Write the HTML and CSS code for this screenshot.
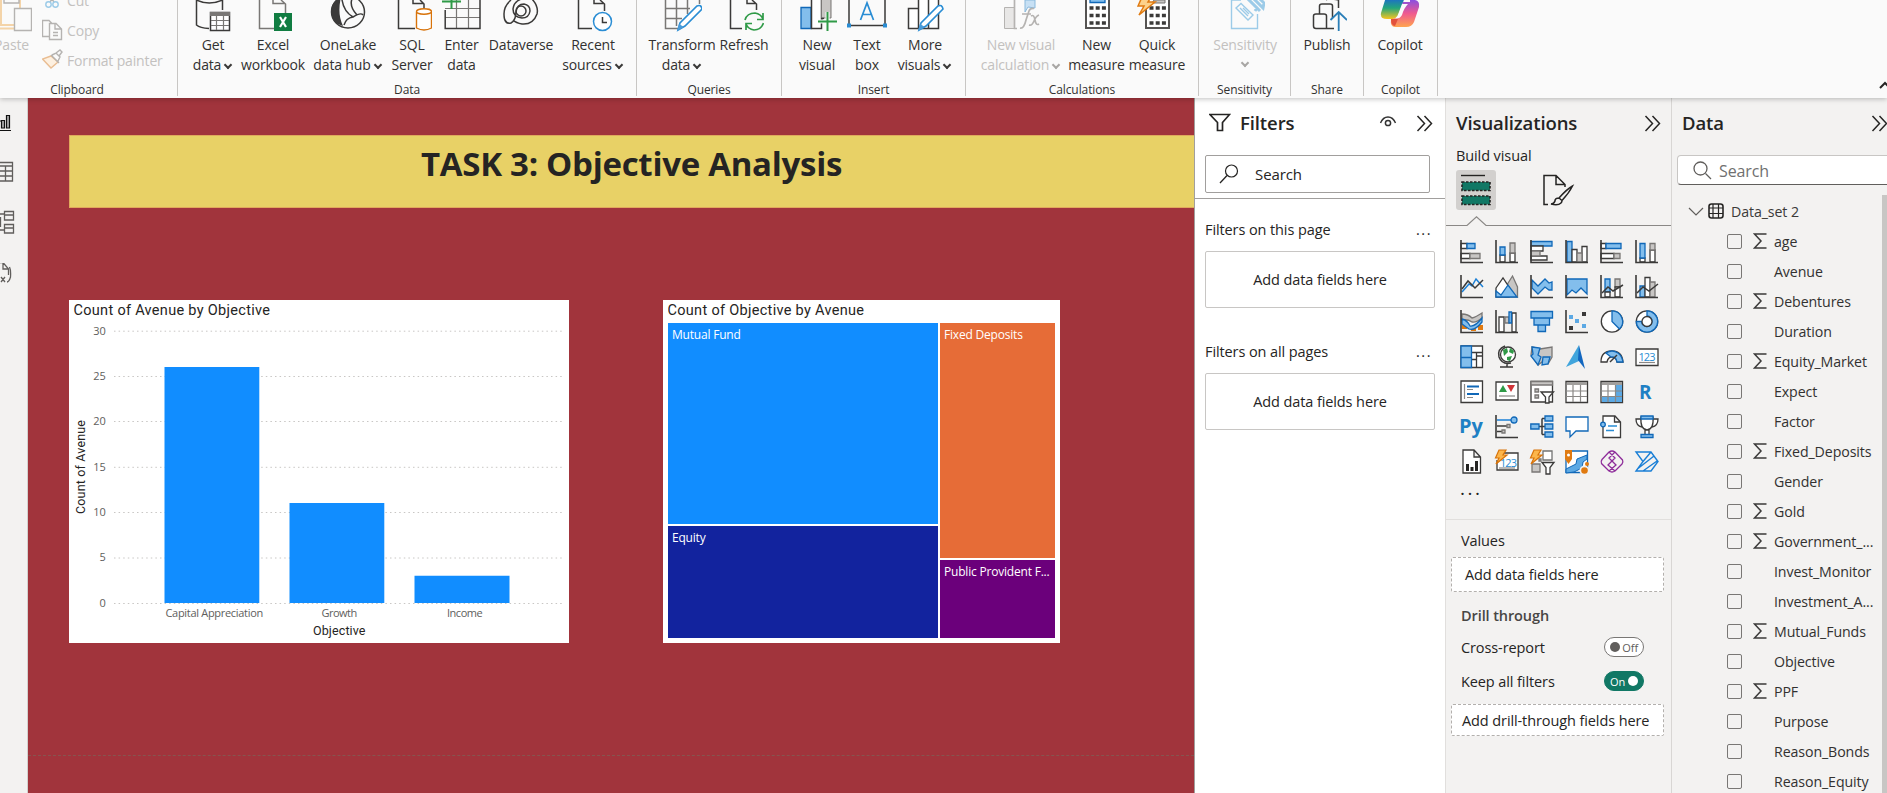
FILE: index.html
```html
<!DOCTYPE html>
<html lang="en">
<head>
<meta charset="utf-8">
<title>Objective Analysis</title>
<link rel="stylesheet" href="styles.css">
</head>
<body>
<svg width="0" height="0" class="defs"><symbol id="sigma" viewBox="0 0 14 16"><path d="M13.500 1H1.500L8 8L1.500 15H13.500" fill="none" stroke="#3b3a39" stroke-width="1.500"/></symbol></svg>
<div class="app">
<header class="ribbon">
  <section class="group clipboard">
    <div class="tools">
      <div class="paste">
        <svg width="32" height="32" viewBox="0 0 32 32"><path class="tan" d="M-6 28.500H14M1 0V25H14M20 0V8" stroke-opacity=".9"/><path class="dis" d="M4 0V3H19V0M14.500 8.500H31.500V30.500H14.500Z"/></svg>
        <span>Paste</span>
      </div>
      <ul class="clips">
        <li><svg width="22" height="22" viewBox="42 -8 22 22"><g class="dis"><path d="M47 -5L54 5M57 -5L50 5"/></g><g class="pale"><circle cx="48.500" cy="7.500" r="2.700"/><circle cx="55.500" cy="7.500" r="2.700"/></g></svg>Cut</li>
        <li><svg width="22" height="22" viewBox="42 20 22 22"><path class="dis" d="M49 37.500H42.500V21.500H49L52 24.500M55 24.500H49.500V40.500H61.500V30L56 24.500H55V30H61M53 33.500H58M53 36.500H58"/></svg>Copy</li>
        <li><svg width="22" height="22" viewBox="42 50 22 22"><path d="M51 57L42.500 60L51 69L58 63Z" fill="#fdf0e0" stroke="#e9bd92" stroke-width="1.400"/><path class="dis" d="M51 56L59 64M52 56L56 54L60 58L58 62M56 54L60 51L62 53L59 57"/></svg>Format painter</li>
      </ul>
    </div>
    <h2>Clipboard</h2>
  </section>
  <section class="group data">
    <div class="tools">
      <div class="btn w56"><svg viewBox="196 0 40 32"><path class="d" d="M199.500 0V25Q203 28 212 28.500M225.500 0V10M199.500 0Q212 6 225.500 0"/><path class="dw" d="M213.500 12.500H232.500V30.500H213.500Z"/><path d="M213 12H233V16H213Z" fill="#797775"/><path class="g" d="M214 20.500H232M214 25.500H232M219.500 16V30M226.500 16V30"/></svg><span>Get</span><span>data<i class="chev"></i></span></div>
      <div class="btn w64"><svg viewBox="254 0 40 32"><path class="g2" d="M276 28.500H260.500V0M286.500 13V4L282 0M274 0V3.500H286"/><path d="M275 13H293V31H275Z" fill="#107c41"/><path d="M281 17L287 27M287 17L281 27" stroke="#fff" stroke-width="2.200"/></svg><span>Excel</span><span>workbook</span></div>
      <div class="btn w86"><svg viewBox="328 0 40 32"><ellipse cx="348" cy="12" rx="16.500" ry="16" class="d2"/><path d="M341 -3Q337 14 343 26Q332 24 331 12Q331 1 341 -3Z" fill="#3b3a39"/><path class="d2" d="M342 0Q344 12 353 17Q361 12 363 15M344 25Q346 18 353 17M353 -3Q348 5 357 15"/></svg><span>OneLake</span><span>data hub<i class="chev"></i></span></div>
      <div class="btn w42"><svg viewBox="392 0 40 32"><path class="d2" d="M415 28.500H398.500V0M413 0V3.500H424M420 0L424 4V8"/><path d="M416.500 12V28Q424 32 431.500 28V12" fill="#fff" stroke="#d8730a" stroke-width="1.400"/><ellipse cx="424" cy="11.500" rx="7.500" ry="2.800" fill="#fff" stroke="#d8730a" stroke-width="1.400"/></svg><span>SQL</span><span>Server</span></div>
      <div class="btn w58"><svg viewBox="442 0 40 32"><path class="g" d="M456.500 0V28M468.500 0V28M445 8.500H480M445 17.500H480"/><path class="d2" d="M445.200 10V28.500H480V0"/><path d="M442 1.500H461M451.500 0V9" stroke="#2f9a47" stroke-width="2"/></svg><span>Enter</span><span>data</span></div>
      <div class="btn w62"><svg viewBox="502 0 40 32"><path class="d2" d="M512 23Q505 25 505 14Q505 6 512 0M506 20Q508 24 512 23Q517 20 517 12Q518 4 525 4Q531 5 531 11Q530 18 523 18Q514 17 514 9Q515 0 526 -2M532 -2Q540 6 538 14Q534 25 523 24Q517 23 514 20"/><circle cx="522" cy="11" r="5" class="d2"/></svg><span>Dataverse</span></div>
      <div class="btn w82"><svg viewBox="573 0 40 32"><path class="d2" d="M592 28.500H578.500V0M594 0V3.500H604M600 0L604.500 4V11"/><circle cx="602.500" cy="21.500" r="9" fill="#fff" stroke="#2a8dd4" stroke-width="1.500"/><path class="d" d="M602.500 17V22.500H607"/></svg><span>Recent</span><span>sources<i class="chev"></i></span></div>
    </div>
    <h2>Data</h2>
  </section>
  <section class="group queries">
    <div class="tools">
      <div class="btn w70"><svg viewBox="662 0 40 32"><path class="g2" d="M678 28.500H665.500V0M699.500 0V4M665 8.500H690M665 18.500H682M676.500 0V26M687.500 0V14"/><path class="pen" d="M678 30L680 23L697 6Q701 4 702 9L685 26Z"/><path d="M677 31L679 24L684 27Z" fill="#4a9bd8"/></svg><span>Transform</span><span>data<i class="chev"></i></span></div>
      <div class="btn w54"><svg viewBox="724 0 40 32"><path class="d2" d="M742 28.500H730.500V0M747 0V3.500H756M752 0L756.500 4V10"/><path d="M745 20Q747 13 755 13Q761 14 763 19M763 13V19.500H757M763.500 23Q761 30 754 30Q748 29 746 24M746 30V23.500H752" fill="none" stroke="#2f9a47" stroke-width="1.700"/></svg><span>Refresh</span></div>
    </div>
    <h2>Queries</h2>
  </section>
  <section class="group insert">
    <div class="tools">
      <div class="btn w48"><svg viewBox="797 0 40 32"><path class="b" d="M801 7.500H811V28.500H801Z"/><path class="dw" d="M811.500 -2V28.500H821.500V-2Z"/><path d="M821.500 -2H831V18H821.500Z" fill="#c8c6c4" stroke="#797775"/><path d="M822 22V18.500H824" class="d"/><path d="M818 21.500H837M827.500 12V31" stroke="#fafafa" stroke-width="4"/><path d="M818 21.500H837M827.500 12V31" stroke="#2f9a47" stroke-width="2"/></svg><span>New</span><span>visual</span></div>
      <div class="btn w52"><svg viewBox="847 0 40 32"><path class="d2" d="M849 0V25.500H885V0"/><path d="M847 23.500H851V27.500H847ZM883 23.500H887V27.500H883Z" fill="#2a8dd4"/><path d="M860.500 20L867 3L873.500 20M862.500 14.500H871.500" fill="none" stroke="#2a8dd4" stroke-width="1.700"/></svg><span>Text</span><span>box</span></div>
      <div class="btn w64"><svg viewBox="905 0 40 32"><path class="dw" d="M908.500 8.500H918.500V28.500H908.500ZM918.500 -2V28.500H928.500V-2M928.500 0V28.500H938.500V0"/><path class="pen" d="M919 30L921 23L938 6Q942 4 943 9L926 26Z"/><path d="M918 31L920 24L925 27Z" fill="#4a9bd8"/></svg><span>More</span><span>visuals<i class="chev"></i></span></div>
    </div>
    <h2>Insert</h2>
  </section>
  <section class="group calc">
    <div class="tools">
      <div class="btn w94 off"><svg viewBox="1001 0 40 32"><path d="M1004.500 7.500H1014.500V28.500H1004.500Z" fill="#e8e7e6" stroke="#b5b3b1"/><path d="M1025 0H1035V8L1028 7L1025 12Z" fill="#c7e0f4" stroke="#8ab9dc"/><path class="dis fx" d="M1014.500 0V28.500H1017M1020 28Q1024 29 1026 20L1029 11Q1030 8 1034 8.500M1022 14H1031M1031 16Q1034 14 1035 20Q1036 26 1039 24M1039 15Q1036 16 1034 21Q1032 26 1029 25"/></svg><span>New visual</span><span>calculation<i class="chev"></i></span></div>
      <div class="btn w58"><svg viewBox="1076 0 40 32"><path d="M1085 -2H1108V28H1085Z" fill="#fff" stroke="#555352" stroke-width="2"/><path class="b" d="M1089 -2H1104V2.500H1089Z"/><path d="M1088.500 8H1105M1088.500 15.500H1105M1088.500 23H1105" stroke="#3b3a39" stroke-width="3.600" stroke-dasharray="4 2.200"/></svg><span>New</span><span>measure</span></div>
      <div class="btn w64"><svg viewBox="1137 0 40 32"><path d="M1146 -2H1169V28H1146Z" fill="#fff" stroke="#555352" stroke-width="2"/><path d="M1154 0H1165V3H1152Z" fill="#c8c6c4" stroke="#797775"/><path d="M1149.500 8H1166M1149.500 15.500H1166M1149.500 23H1166" stroke="#3b3a39" stroke-width="3.600" stroke-dasharray="4 2.200"/><path d="M1142 -3H1151L1148 2H1155L1139 15L1144 6H1138Z" fill="#fcd28b" stroke="#e07a10" stroke-width="1.500"/></svg><span>Quick</span><span>measure</span></div>
    </div>
    <h2>Calculations</h2>
  </section>
  <section class="group sens">
    <div class="tools"><div class="btn w92 off"><svg viewBox="1224 0 40 32"><path class="pale" d="M1240 0H1230.500V28.500H1256.500V14M1235 8L1240 3.500L1252 15L1247 20ZM1239 8L1247 16M1242 8L1248 14"/><path d="M1246 -2L1256 8L1254 11M1252 -2L1262 8L1263 3L1256 -4M1256 8L1259 11" fill="none" stroke="#9ccbe8" stroke-width="3"/></svg><span>Sensitivity</span><span><i class="chev solo"></i></span></div></div>
    <h2>Sensitivity</h2>
  </section>
  <section class="group share">
    <div class="tools"><div class="btn w72"><svg viewBox="1307 0 40 32"><path class="d2" d="M1326 28.500H1316Q1313.500 28.500 1313.500 26V16Q1313.500 14 1316 14H1324Q1326.500 14 1326.500 16V28M1319.500 14V6Q1319.500 4 1322 4H1330Q1332.500 4 1332.500 6V18M1334 28.500H1326M1326 0Q1328 -2 1338.500 0V8"/><path d="M1338.700 31V12M1330.500 20L1338.700 12L1347 20" fill="none" stroke="#2b7fb8" stroke-width="1.800"/></svg><span>Publish</span></div></div>
    <h2>Share</h2>
  </section>
  <section class="group copilot">
    <div class="tools"><div class="btn w72"><svg viewBox="1380 0 40 32"><defs>
      <linearGradient id="cl" x1="0" y1="0" x2="0" y2="1"><stop offset="0" stop-color="#1b62d8"/><stop offset=".5" stop-color="#23a67b"/><stop offset="1" stop-color="#f7c51e"/></linearGradient>
      <linearGradient id="cr" x1="0" y1="0" x2="0" y2="1"><stop offset="0" stop-color="#8a4fe0"/><stop offset=".5" stop-color="#ef5a8f"/><stop offset="1" stop-color="#ffa44f"/></linearGradient></defs>
      <path d="M1386 -3H1405L1398 16Q1396 19 1393 19H1387Q1380 19 1381 13Z" fill="url(#cl)"/><path d="M1403 2H1410V0H1415Q1420 1 1419 7L1414 22Q1412 27 1406 27H1395Q1390 27 1391 19Q1397 19 1399 14Z" fill="url(#cr)"/><path d="M1402 4H1408Q1404 8 1402 15Q1400 19 1395 18.500Q1398 16 1399 12Z" fill="#fafafa"/><path d="M1391 19H1398L1395 26Q1391 26 1391 19Z" fill="#e2513c"/></svg><span>Copilot</span></div></div>
    <h2>Copilot</h2>
  </section>
  <svg class="collapse" width="8" height="9" viewBox="0 0 8 9"><path d="M1 7L6 2L11 7" fill="none" stroke="#252423" stroke-width="2"/></svg>
</header>

<main class="work">
  <nav class="rail">
    <svg width="16" height="20" viewBox="0 112 16 20"><path d="M-1 121H1M1.500 120.500H4.500V128H1.500ZM6.500 115.500H9.500V128H6.500ZM0 130.500H11" fill="#aaa" stroke="#111" stroke-width="1.200"/></svg>
    <svg width="16" height="24" viewBox="0 159 16 24"><path class="r" d="M0 162.500H12.500V181H0M0 166H12M0 171H12M0 176H12M5.500 166V181"/></svg>
    <svg width="16" height="26" viewBox="0 210 16 26"><path class="r" d="M4.500 211.500H13.500V220H4.500ZM4.500 215H13M4.500 224.500H13.500V233H4.500ZM4.500 228H13M0 214H4M0 230H4M.5 217V227"/></svg>
    <svg width="16" height="26" viewBox="0 263 16 26"><path class="r" d="M0 262.500H3L8.500 269V275M3 262.500V269H8M9.500 267Q11 270 10.500 277Q9 282 7 282M1 277L5 282M5 277L1 282"/></svg>
  </nav>

  <section class="canvas">
    <h1 class="banner">TASK 3: Objective Analysis</h1>
    <div class="visuals">
      <svg class="card" width="500" height="343" viewBox="69 300 500 343" role="img">
        <text class="din" x="73.500" y="315" textLength="196.500">Count of Avenue by Objective</text>
        <path class="grid" d="M114 331.200H562M114 376.500H562M114 421.500H562M114 467.300H562M114 512.500H562M114 558H562M114 603.500H562"/>
        <g class="tick end"><text x="105.500" y="335">30</text><text x="105.500" y="380">25</text><text x="105.500" y="425">20</text><text x="105.500" y="471">15</text><text x="105.500" y="516">10</text><text x="105.500" y="561">5</text><text x="105.500" y="607">0</text></g>
        <path d="M164.500 367H259.300V603H164.500ZM289.500 503H384.300V603H289.500ZM414.500 575.700H509.500V603H414.500Z" fill="#118dff"/>
        <g class="tick"><text x="165.500" y="617" textLength="97.500">Capital Appreciation</text><text x="321.500" y="617" textLength="35.500">Growth</text><text x="447" y="617" textLength="35.500">Income</text></g>
        <text class="din ax" x="313" y="635" textLength="52.500">Objective</text>
        <text class="din ax" transform="translate(85 514) rotate(-90)" textLength="94">Count of Avenue</text>
      </svg>
      <div class="card tree">
        <svg width="388" height="22" viewBox="668 300 388 22"><text class="din" x="667.500" y="315" textLength="196.500">Count of Objective by Avenue</text></svg>
        <div class="map">
          <div class="col"><div class="leaf mutual">Mutual Fund</div><div class="leaf equity">Equity</div></div>
          <div class="col narrow"><div class="leaf fixed">Fixed Deposits</div><div class="leaf ppf">Public Provident F...</div></div>
        </div>
      </div>
    </div>
    <div class="pageline"></div>
  </section>

  <aside class="filters">
    <div class="fhead">
      <svg width="22" height="20" viewBox="0 0 22 20"><path d="M1 1.500H20.500L13.500 9.500V17.500H8.500V9.500Z" fill="none" stroke="#252423" stroke-width="1.700"/></svg>
      <h3>Filters</h3>
      <svg class="eye" width="18" height="14" viewBox="0 0 18 14"><path d="M1.500 8Q4 2 9 2Q14 2 16.500 8" fill="none" stroke="#333" stroke-width="1.400"/><circle cx="9" cy="8" r="2.600" fill="none" stroke="#333" stroke-width="1.500"/></svg>
      <svg width="17" height="17" viewBox="0 0 17 17"><path class="dbl" d="M1.500 1L8.500 8.500L1.500 16M8.500 1L15.500 8.500L8.500 16"/></svg>
    </div>
    <div class="search"><svg width="20" height="20" viewBox="0 0 20 20"><circle cx="12.500" cy="7" r="6" fill="none" stroke="#252423" stroke-width="1.200"/><path d="M1 19L8 11.500" stroke="#252423" stroke-width="1.300"/></svg>Search</div>
    <div class="fsec"><p>Filters on this page<b>...</b></p><div class="well">Add data fields here</div></div>
    <div class="fsec"><p>Filters on all pages<b>...</b></p><div class="well">Add data fields here</div></div>
  </aside>

  <aside class="viz">
    <div class="vhead"><h3>Visualizations</h3><svg width="17" height="17" viewBox="0 0 17 17"><path class="dbl" d="M1.500 1L8.500 8.500L1.500 16M8.500 1L15.500 8.500L8.500 16"/></svg></div>
    <p class="build">Build visual</p>
    <div class="tabs">
      <div class="tab on"><svg width="40" height="40" viewBox="0 0 40 40"><path d="M5 5.500H29" stroke="#252423" stroke-width="1.400"/><path d="M6 12H34V20.500H6ZM6 26H34V34.500H6Z" fill="#117865" stroke="#252423" stroke-width="1.600" stroke-dasharray="2.500 1.500"/></svg></div>
      <div class="tab"><svg width="34" height="34" viewBox="0 0 34 34"><path d="M7 31.500H3V2.500H15L24 11.500V14M15 2.500V11.500H24M31.500 13Q26 16 18 25L21 27.500Q28 20 31.500 13ZM18 25Q14 25 14 28Q13 31 10 31Q17 33 20 30Q21 29 21 27.500" fill="none" stroke="#252423" stroke-width="1.500"/></svg></div>
    </div>
    <svg class="notch" width="225" height="11" viewBox="0 0 225 11"><path d="M0 9.500H21L30.500 .8L40 9.500H225" fill="none" stroke="#8a8886" stroke-width="1.200"/></svg>
    <div class="icons">
      <svg viewBox="0 0 24 24"><path class="k" d="M1 3.500H7V8.500H1ZM1 13.500H10V18.500H1Z"/><path class="b" d="M7 3.500H15V8.500H7Z"/><path class="s" d="M10 13.500H20V18.500H10Z"/><path class="ax2" d="M1 0V22.500H23"/></svg>
      <svg viewBox="0 0 24 24"><path class="k" d="M5 15H10V22H5ZM15 13H20V22H15Z"/><path class="b" d="M5 7H10V15H5Z"/><path class="s" d="M15 3H20V13H15Z"/><path class="ax2" d="M1 0V22.500H23"/></svg>
      <svg viewBox="0 0 24 24"><path class="b" d="M1 1.500H22V6H1Z"/><path class="k" d="M1 6H13V11H1ZM1 16H17V20H1Z"/><path class="s" d="M1 11H10V16H1Z"/><path class="ax2" d="M1 0V22.500H23"/></svg>
      <svg viewBox="0 0 24 24"><path class="b" d="M2 1.500H7V22H2Z"/><path class="k" d="M7 9.500H12V22H7ZM17 6.500H22V22H17Z"/><path class="s" d="M12 13H17V22H12Z"/><path class="ax2" d="M1 0V22.500H23"/></svg>
      <svg viewBox="0 0 24 24"><path class="k" d="M1 3.500H6V8.500H1ZM1 13.500H14V18.500H1Z"/><path class="b" d="M6 3.500H21V8.500H6Z"/><path class="s" d="M14 13.500H20V18.500H14Z"/><path class="ax2" d="M1 0V22.500H23"/></svg>
      <svg viewBox="0 0 24 24"><path class="k" d="M5 18H10V22H5ZM15 10H20V22H15Z"/><path class="b" d="M5 3.500H10V18H5Z"/><path class="s" d="M15 3.500H20V10H15Z"/><path class="ax2" d="M1 0V22.500H23"/></svg>

      <svg viewBox="0 0 24 24"><path class="bl" d="M2 17L9 9L12 11L16 4L23 12"/><path class="kl" d="M2 14L8 6L15 13L23 5"/><path class="ax2" d="M1 0V22.500H23"/></svg>
      <svg viewBox="0 0 24 24"><path class="s" d="M10 13L17.500 1L22.500 12V22H10Z"/><path class="k" d="M1 13L8 3L14 12V22H1Z"/><path class="b" d="M1 16L6 20L13 10L22 22H1Z"/></svg>
      <svg viewBox="0 0 24 24"><path class="b" d="M2 5L8 11L15 4L19 8L22 7V15H19L15 12L8 19L2 13Z"/><path class="ax2" d="M1 0V22.500H23"/></svg>
      <svg viewBox="0 0 24 24"><path class="b" d="M2 4H22V19L16 13L11 18L7 15L2 20Z"/><path class="ax2" d="M1 0V22.500H23"/></svg>
      <svg viewBox="0 0 24 24"><path class="b" d="M5 4H10V17H5Z"/><path class="s" d="M15 4H20V12H15Z"/><path class="k" d="M5 17H10V22H5ZM15 12H20V22H15Z"/><path class="kl" d="M2 18L8 12L13 16L23 10"/><path class="ax2" d="M1 0V22.500H23"/></svg>
      <svg viewBox="0 0 24 24"><path class="b" d="M5 11H10V22H5Z"/><path class="k" d="M10 2.500H15V22H10Z"/><path class="s" d="M15 7H20V22H15Z"/><path class="kl" d="M2 18L8 12L14 16L23 9"/><path class="ax2" d="M1 0V22.500H23"/></svg>

      <svg viewBox="0 0 24 24"><path d="M2 14H7V19H2ZM11 16H16V21H11ZM18 15H23V20H18Z" fill="#e07a10"/><path class="s" d="M2 4Q8 4 12 8Q16 7 22 3V8Q16 13 12 12Q8 9 2 10Z"/><path class="b" d="M2 9Q7 10 10 16Q15 17 22 8V12Q15 21 9 19Q6 17 2 14Z"/><path class="ax2" d="M1 0V22.500H23"/></svg>
      <svg viewBox="0 0 24 24"><path class="k" d="M4 7H9V22H4ZM17 3H21V22H17Z"/><path class="s" d="M10 7H14V13H10Z"/><path class="b" d="M14 2H16.500V13H14Z"/><path class="ax2" d="M1 0V22.500H23"/></svg>
      <svg viewBox="0 0 24 24"><path class="b" d="M1 1.500H22.500V8H1ZM4 8H19.500V15H4ZM8 15H15.500V21.500H8Z"/></svg>
      <svg viewBox="0 0 24 24"><path d="M17 2H21V6H17ZM4 16H8V20H4Z" fill="#3b3a39"/><path d="M4 5H8V9H4ZM10 9H14V13H10ZM17 14H21V18H17Z" fill="#5ca9e4"/><path class="ax2" d="M1 0V22.500H23"/></svg>
      <svg viewBox="0 0 24 24"><circle class="k" cx="12" cy="11.500" r="10.700"/><path class="b" d="M12 .8A10.700 10.700 0 0 1 19.500 19L12 11.500Z"/></svg>
      <svg viewBox="0 0 24 24"><circle class="k" cx="12" cy="11.500" r="10.700"/><path class="b" d="M12 .8A10.700 10.700 0 1 1 1.300 11.500H6.500A5.300 5.300 0 1 0 12 6Z"/><circle class="k" cx="12" cy="11.500" r="5"/></svg>

      <svg viewBox="0 0 24 24"><path class="k" d="M1 1H22.500V22.500H1ZM12 7.500H22M16.500 8V22M12 14.500H16.500M17 11H22"/><path class="b" d="M1 1H11.500V22.500H1ZM1 12.500H11"/></svg>
      <svg viewBox="0 0 24 24"><circle class="k" cx="13" cy="9.500" r="7.500"/><path d="M8 5L12 3L13 7L9 11ZM15 3L19 6L18 9L14 7ZM12 12L17 11L15 16L12 15Z" fill="#2f9a47"/><path class="kl" d="M10 1Q2 4 4 12Q7 20 16 18M12 19V22M5 22H18"/></svg>
      <svg viewBox="0 0 24 24"><path class="s" d="M2 2L10 4L22 2V12L18 19L12 17L8 20L1 10Z"/><path class="b" d="M2 2L10 3L8 10L11 12L8 20L1 11L3 9ZM13 12H20L18 19L12 20Z"/></svg>
      <svg viewBox="0 0 24 24"><path d="M14 0L1 22L14 16Z" fill="#41a5dc"/><path d="M14 0L20 24L13 15Z" fill="#1267c0"/></svg>
      <svg viewBox="0 0 24 24"><path class="k" d="M1 17Q1 6 12 6Q22 6 23 17H17Q16 12 12 12Q8 12 7 17Z"/><path class="b" d="M6 8Q12 4 18 8Q22 11 23 17H17Q16 11 11 12Z"/><path class="kl" d="M10 17L17 10"/></svg>
      <svg viewBox="0 0 24 24"><path class="k" d="M1 4H23V20.500H1Z"/><path class="gl" d="M4 17.500H20"/><text x="3.500" y="15.500" textLength="17" class="num">123</text></svg>

      <svg viewBox="0 0 24 24"><path class="k" d="M1 1H22.500V22.500H1Z"/><path class="gl" d="M4.500 4V19M7 9.500H13M7 17.500H13"/><path d="M7 6.500H19M7 14H19" stroke="#1068b8" stroke-width="2"/></svg>
      <svg viewBox="0 0 24 24"><path class="k" d="M1 2H23V20H1Z"/><path d="M4 12L8 5L12 12Z" fill="#2f9a47"/><path d="M12 5H20L16 12Z" fill="#d13438"/><path class="gl" d="M4 16H20"/></svg>
      <svg viewBox="0 0 24 24"><path class="k" d="M1 1.500H22.500V22H1Z"/><path class="s" d="M1 1.500H22.500V5H1ZM5 9H8.500V12H5ZM5 15H8.500V18H5Z"/><path class="k" d="M11 12H23.500L19 17V23H15.500V17Z"/></svg>
      <svg viewBox="0 0 24 24"><path class="k" d="M1 1.500H22.500V22.500H1Z"/><path class="gl" d="M8 5V22M15.500 5V22M1 11H22M1 16.500H22"/><path d="M2 2H22V5H2Z" fill="#a19f9d"/></svg>
      <svg viewBox="0 0 24 24"><path class="k" d="M1 1.500H22.500V22.500H1Z"/><path d="M15 5H22V22H2V16H15Z" fill="#5ca9e4"/><path class="gl" d="M8 5V22M15.500 5V22M1 11H22M1 16.500H22"/><path d="M2 2H22V5H2Z" fill="#a19f9d"/></svg>
      <svg viewBox="0 0 24 24"><text x="4" y="19" class="lang" textLength="12.500" lengthAdjust="spacingAndGlyphs">R</text></svg>

      <svg viewBox="0 0 24 24"><text x="-1" y="17.500" class="lang" textLength="24">Py</text></svg>
      <svg viewBox="0 0 24 24"><path class="bl" d="M2 5H16"/><circle class="b" cx="19" cy="5" r="3"/><path class="kl" d="M2 11H12M2 16.500H8"/><path class="s" d="M12 9.500H15V12.500H12ZM7 15H10V18H7Z"/><path class="ax2" d="M1 0V22.500H23"/></svg>
      <svg viewBox="0 0 24 24"><path class="kl" d="M9 11.500H15M12 3.500H15M12 19.500H15M12 3.500V19.500"/><path class="b" d="M.8 9H9V14H.8ZM15 1H22.800V6H15ZM15 9H22.800V14H15ZM15 17H22.800V22H15Z"/></svg>
      <svg viewBox="0 0 24 24"><path d="M1 2H23V16H11L5 22V16H1Z" fill="#fff" stroke="#1068b8" stroke-width="1.300"/></svg>
      <svg viewBox="0 0 24 24"><path class="k" d="M3 1H15L20.500 7V22.500H3ZM14.500 1V7H20"/><circle class="b" cx="3" cy="9.500" r="2.300"/><path d="M8 11H17M6 15.500H14" stroke="#2a8dd4" stroke-width="1.300"/></svg>
      <svg viewBox="0 0 24 24"><path class="k" d="M6 4H1Q1 11 7 12M18 4H23Q23 11 17 12M6 2H18Q19 14 12 15Q5 14 6 2ZM10 15V20H14V15"/><path class="b" d="M6 1H18V4H6ZM6 19.500H18V22.500H6Z"/></svg>

      <svg viewBox="0 0 24 24"><path class="k" d="M3 0H14L20.500 7V23H3ZM14 0V7H20"/><path d="M6 14H9V21H6ZM10.500 17H13.500V21H10.500ZM15 11H18V21H15Z" fill="#252423"/></svg>
      <svg viewBox="0 0 24 24"><path class="k" d="M5 3H23V20H2V10"/><text x="5" y="16.500" textLength="17" class="num">123</text><path class="gl" d="M4 18H20"/><path class="bolt" d="M4 0H11L8 5H12L1 14L4 8H.5Z"/></svg>
      <svg viewBox="0 0 24 24"><path class="k" d="M13 1H22V10H13Z" stroke-opacity=".7"/><path class="s" d="M2 14H10V22H2ZM9 9H11V11H9Z"/><path class="bolt" d="M4 0H11L8 5H12L1 14L4 8H.5Z"/><path class="k" d="M12 12.500H24L20 17.500V24H16V17.500Z"/></svg>
      <svg viewBox="0 0 24 24"><path d="M1 1H22.500V22.500H1Z" fill="#fff" stroke="#1068b8" stroke-width="1.300"/><path d="M1 23V19L11 14L12 9L22 5V9L18 12L17 18L9 22Z" fill="#5ca9e4" stroke="#1068b8"/><path d="M0 0H7V9L3.500 14L0 9Z" fill="#e07a10"/><circle cx="3.500" cy="5" r="1.500" fill="#fff"/><circle cx="19.500" cy="20.500" r="5" fill="#f3f2f1"/><circle cx="19.500" cy="20.500" r="3.300" fill="#e07a10"/><circle cx="22" cy="14" r="2" fill="#e07a10"/></svg>
      <svg viewBox="0 0 24 24"><path d="M9 2Q12 0 15 2L22.500 10Q23.500 12 22 14L15 21Q12 23 9 21L1.500 13.500Q.5 11.500 2 9.500ZM9 2L15 8L8 15L15 21M15 2L9 8L16 15L9 21" fill="none" stroke="#8e2d9a" stroke-width="1.300"/></svg>
      <svg viewBox="0 0 24 24"><path d="M1 2H16L23 11.500L16 21H1L8 11.500ZM16 2L8 11.500M19 6L3 18.500M22 11L8 21" fill="none" stroke="#1a7fd6" stroke-width="1.400"/></svg>
    </div>
    <div class="more">...</div>
    <div class="fields">
      <p>Values</p>
      <div class="drop v">Add data fields here</div>
      <p class="drill">Drill through</p>
      <div class="opt"><span>Cross-report</span><span class="toggle"><i></i>Off</span></div>
      <div class="opt"><span>Keep all filters</span><span class="toggle yes">On<i></i></span></div>
      <div class="drop t">Add drill-through fields here</div>
    </div>
  </aside>

  <aside class="dpanel">
    <div class="dhead"><h3>Data</h3><svg width="16" height="17" viewBox="0 0 16 17"><path class="dbl" d="M1.500 1L8.500 8.500L1.500 16M8.500 1L15.500 8.500L8.500 16"/></svg></div>
    <div class="dsearch"><svg width="19" height="19" viewBox="0 0 19 19"><circle cx="7.500" cy="7.500" r="6.500" fill="none" stroke="#605e5c" stroke-width="1.300"/><path d="M12.500 12.500L18 18" stroke="#605e5c" stroke-width="1.300"/></svg>Search</div>
    <div class="tree-root"><svg width="16" height="9" viewBox="0 0 16 9"><path d="M1 1L8 8L15 1" fill="none" stroke="#605e5c" stroke-width="1.200"/></svg><svg width="16" height="16" viewBox="0 0 16 16"><rect x="1" y="1" width="14" height="14" rx="2.500" fill="none" stroke="#252423" stroke-width="1.600"/><path d="M1 5H15M1 10.500H15M5 1V15M10.500 1V15" stroke="#252423" stroke-width="1.200"/></svg>Data_set 2</div>
    <ul class="list">
      <li><i></i><svg><use href="#sigma"/></svg>age</li>
      <li><i></i>Avenue</li>
      <li><i></i><svg><use href="#sigma"/></svg>Debentures</li>
      <li><i></i>Duration</li>
      <li><i></i><svg><use href="#sigma"/></svg>Equity_Market</li>
      <li><i></i>Expect</li>
      <li><i></i>Factor</li>
      <li><i></i><svg><use href="#sigma"/></svg>Fixed_Deposits</li>
      <li><i></i>Gender</li>
      <li><i></i><svg><use href="#sigma"/></svg>Gold</li>
      <li><i></i><svg><use href="#sigma"/></svg>Government_...</li>
      <li><i></i>Invest_Monitor</li>
      <li><i></i>Investment_A...</li>
      <li><i></i><svg><use href="#sigma"/></svg>Mutual_Funds</li>
      <li><i></i>Objective</li>
      <li><i></i><svg><use href="#sigma"/></svg>PPF</li>
      <li><i></i>Purpose</li>
      <li><i></i>Reason_Bonds</li>
      <li><i></i>Reason_Equity</li>
    </ul>
    <div class="scroll"></div>
  </aside>
</main>
</div>
</body>
</html>
```
FILE: styles.css
```css
* { box-sizing: border-box; }
body { margin: 0; overflow: hidden; font-family: "Open Sans", "Noto Sans", sans-serif; font-size: 14.5px; letter-spacing: -0.1px; color: #252423; }
h1, h2, h3, p, ul { margin: 0; padding: 0; list-style: none; }
svg { display: block; flex: none; }
:where(path:not([fill])) { fill: none; }
.defs { position: absolute; }
.app { width: 1887px; height: 793px; display: flex; flex-direction: column; overflow: hidden; }

/* ribbon */
.ribbon { position: relative; z-index: 2; height: 98px; flex: none; display: flex; background: #fafafa; box-shadow: 0 1px 5px rgba(0,0,0,.25); font-size: 14px; letter-spacing: -0.15px; color: #323130; }
.group { height: 96px; display: flex; flex-direction: column; border-right: 1px solid #c8c6c4; flex: none; }
.group h2 { font-size: 12px; font-weight: 400; line-height: 16px; margin-top: auto; margin-bottom: -2px; text-align: center; letter-spacing: -0.1px; }
.tools { display: flex; height: 78px; }
.clipboard { width: 178px; }
.clipboard h2 { padding-right: 23px; }
.data { width: 459px; } .data .tools { padding-left: 7px; }
.queries { width: 145px; } .queries .tools { padding-left: 10px; }
.insert { width: 184px; } .insert .tools { padding-left: 11px; }
.calc { width: 233px; } .calc .tools { padding-left: 8px; }
.sens { width: 92px; } .share { width: 73px; } .copilot { width: 74px; }
.btn { display: flex; flex-direction: column; align-items: center; white-space: nowrap; flex: none; }
.btn svg { width: 40px; height: 32px; margin-bottom: 3px; }
.btn span { height: 20px; line-height: 20px; }
.w42 { width: 42px; } .w48 { width: 48px; } .w52 { width: 52px; } .w54 { width: 54px; } .w56 { width: 56px; } .w58 { width: 57px; } .w62 { width: 62px; } .w64 { width: 64px; } .w70 { width: 70px; } .w72 { width: 72px; } .w82 { width: 82px; } .w86 { width: 86px; } .w92 { width: 92px; } .w94 { width: 94px; }
.off { color: #c3c1bf; }
.chev { display: inline-block; width: 6px; height: 6px; border: solid #3b3a39; border-width: 0 2px 2px 0; transform: rotate(45deg); margin: 0 2px 2px 4px; }
.off .chev { border-color: #a8a6a4; }
.chev.solo { margin: 0 0 4px; }
.paste { width: 42px; display: flex; flex-direction: column; color: #c3c1bf; }
.paste span { margin: 3px 0 0 -6px; line-height: 20px; }
.clips { color: #c3c1bf; margin-top: -15px; }
.clips li { display: flex; align-items: center; height: 30px; gap: 3px; white-space: nowrap; }
.collapse { margin: 81px 0 0 auto; }
.dis { fill: none; stroke: #b5b3b1; stroke-width: 1.4; }
.fx { stroke-width: 1.7; }
.tan { fill: none; stroke: #f3cfa0; stroke-width: 2; }
.pale { fill: none; stroke: #9ccbe8; stroke-width: 1.4; }
.d, .d2 { fill: none; stroke: #3b3a39; stroke-width: 1.5; }
.dw { fill: #fff; stroke: #3b3a39; stroke-width: 1.5; }
.g { stroke: #797775; stroke-width: 1.2; }
.g2 { stroke: #797775; stroke-width: 1.5; }
.pen { fill: #fff; stroke: #2a8dd4; stroke-width: 1.6; }
.b { fill: #83beec; stroke: #1068b8; stroke-width: 1.3; }
.k { fill: #fff; stroke: #3b3a39; stroke-width: 1.3; }
.s { fill: #c8c6c4; stroke: #797775; stroke-width: 1.3; }
.kl, .bl, .gl { fill: none; stroke: #3b3a39; stroke-width: 1.5; }
.bl { stroke: #1a7fd6; }
.gl { stroke: #8a8886; stroke-width: 1.2; }
.ax2 { stroke: #3b3a39; stroke-width: 1.6; }
.bolt { fill: #fcb64b; stroke: #d8730a; stroke-width: 1.2; }

/* workspace */
.work { flex: 1; display: flex; min-height: 0; }
.rail { width: 28px; background: #f3f2f1; border-right: 1px solid #d2d0ce; padding-top: 14px; display: flex; flex-direction: column; gap: 27px; flex: none; }
.r { stroke: #605e5c; stroke-width: 1.3; }
.canvas { width: 1166px; background: #a1343c; padding: 37px 0 0 41px; flex: none; }
.banner { height: 73px; background: #e8d166; border: 1px solid #e0a95c; border-right: 0; text-align: center; font-size: 33px; line-height: 55px; font-weight: 700; padding-right: 1px; letter-spacing: -0.28px; }
.visuals { display: flex; gap: 94px; margin-top: 92px; }
.card { background: #fff; border: 0; }
.tree { width: 397px; height: 343px; padding: 0 5px; }
.din { font-family: Roboto, sans-serif; font-size: 14.5px; fill: #252423; letter-spacing: 0; }
.ax { font-size: 12.5px; }
.tick { font-size: 11px; fill: #605e5c; letter-spacing: -0.2px; }
.end { text-anchor: end; }
.grid { stroke: #c8c6c4; stroke-width: 1; stroke-dasharray: 1.5 3.1; }
.map { display: flex; gap: 2px; height: 315px; margin-top: 1px; }
.col { width: 270px; display: flex; flex-direction: column; gap: 2px; }
.narrow { width: 115px; }
.leaf { color: #fff; font-size: 12px; padding: 4px 4px; line-height: 16px; letter-spacing: -0.2px; white-space: nowrap; }
.mutual { height: 201px; background: #118dff; }
.equity { flex: 1; background: #12239e; }
.fixed { height: 235px; background: #e66c37; }
.ppf { flex: 1; background: #6b007b; }
.pageline { margin: 112px 0 0 -41px; border-top: 1px dashed #86554f; }

/* panes */
h3 { font-size: 18.5px; font-weight: 600; letter-spacing: -0.1px; line-height: 24px; }
.dbl { stroke: #252423; stroke-width: 1.5; }
.filters { width: 251px; background: #fff; border-left: 1px solid #a19f9d; flex: none; }
.fhead { display: flex; align-items: center; height: 50px; padding: 0 12px 0 14px; }
.fhead h3 { margin-left: 9px; }
.eye { margin: -2px 19px 0 auto; }
.search { margin: 7px 15px 0 10px; width: 225px; height: 38px; border: 1px solid #a19f9d; border-radius: 2px; display: flex; align-items: center; gap: 16px; padding-left: 13px; font-size: 15px; }
.search + .fsec { border-top: 1px solid #a19f9d; margin-top: 5px; padding-top: 20px; }
.fsec { padding: 33px 10px 0 10px; }
.fsec p { line-height: 22px; display: flex; justify-content: space-between; }
.fsec b { font-weight: 400; letter-spacing: 1.5px; padding-right: 3px; }
.well { height: 57px; border: 1px solid #c8c6c4; border-radius: 2px; margin-top: 10px; display: flex; align-items: center; justify-content: center; }
.viz { width: 226px; background: #f3f2f1; border-left: 1px solid #e1dfdd; flex: none; display: flex; flex-direction: column; }
.vhead { display: flex; align-items: center; justify-content: space-between; height: 50px; padding: 0 10px 0 10px; }
.build { padding-left: 10px; line-height: 18px; font-weight: 500; margin-top: -1px; }
.tabs { display: flex; gap: 45px; padding: 4px 0 0 10px; height: 45px; align-items: center; }
.tab.on { background: #d2d0ce; border-radius: 3px; }
.notch { margin-top: 6px; }
.icons { display: grid; grid-template-columns: repeat(6, 24px); gap: 11px; padding: 13px 0 0 14px; }
.icons svg { width: 24px; height: 24px; overflow: visible; }
.num { font-size: 11px; fill: #2a8dd4; letter-spacing: 0; }
.lang { font-size: 20px; font-weight: 700; fill: #1f80c4; letter-spacing: 0; }
.more { font-size: 19px; letter-spacing: 2.5px; line-height: 20px; padding-left: 14px; margin-top: 4px; height: 41px; }
.fields { border-top: 1px solid #e1dfdd; padding: 11px 7px 0 5px; }
.fields p { padding-left: 10px; line-height: 20px; }
.drop { background: #fff; border: 1px dashed #b3b0ad; border-radius: 2px; display: flex; align-items: center; }
.v { height: 35px; margin-top: 6px; padding-left: 13px; }
.t { height: 32px; margin-top: 6px; padding-left: 10px; }
.fields .drill { font-weight: 600; color: #484644; margin-top: 14px; margin-bottom: 4px; }
.opt { display: flex; height: 34px; align-items: center; justify-content: space-between; padding: 0 20px 0 10px; }
.toggle { width: 40px; height: 20px; border: 1px solid #797775; border-radius: 10px; background: #fff; font-size: 11px; display: flex; align-items: center; justify-content: space-between; padding: 0 5px; color: #605e5c; }
.toggle i { width: 10px; height: 10px; border-radius: 50%; background: #605e5c; }
.yes { background: #117865; border-color: #117865; color: #fff; }
.yes i { background: #fff; }
.dpanel { position: relative; width: 216px; background: #f3f2f1; border-left: 1px solid #d8d6d4; flex: none; font-size: 14.2px; letter-spacing: -0.1px; }
.dhead { display: flex; align-items: center; justify-content: space-between; height: 50px; padding: 0 0 0 10px; }
.dsearch { margin: 7px -5px 0 5px; height: 30px; background: #fff; border: 1px solid #c8c6c4; border-bottom-color: #605e5c; border-radius: 4px; display: flex; align-items: center; gap: 7px; padding: 1px 0 0 15px; font-size: 16px; color: #707070; }
.tree-root { display: flex; align-items: center; height: 30px; margin-top: 11px; padding-left: 16px; color: #3b3a39; }
.tree-root svg + svg { margin: 0 7px 0 4px; }
.list li { height: 30px; display: flex; align-items: center; padding-left: 55px; color: #323130; white-space: nowrap; }
.list i { width: 15px; height: 15px; border: 1px solid #797775; border-radius: 2px; margin-right: 32px; flex: none; }
.list svg { width: 14px; height: 16px; margin: 0 7px 0 -21px; }
.scroll { position: absolute; right: 0; top: 97px; width: 5px; height: 620px; background: #c8c6c4; }
```
